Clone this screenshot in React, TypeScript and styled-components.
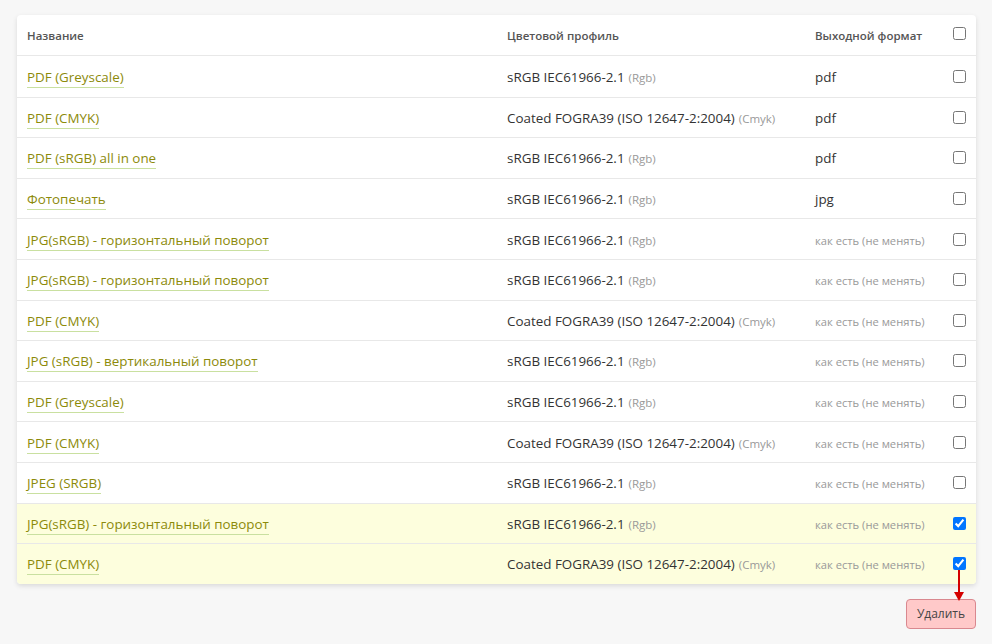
import React, { useState } from "react";
import styled, { createGlobalStyle } from "styled-components";

const Global = createGlobalStyle`
  html, body { margin: 0; padding: 0; background: #f7f7f7; }
  body { font-family: "Open Sans", "Noto Sans", sans-serif; color: #333; }
`;

const Page = styled.div`
  padding: 15px 16px 0 17px;
`;

const Card = styled.div`
  background: #fff;
  border-radius: 4px;
  box-shadow: 0 2px 5px rgba(0,0,0,0.12);
  overflow: hidden;
`;

const COLS = "480px 308px 138px 1fr";

const HeaderRow = styled.div`
  display: grid;
  grid-template-columns: ${COLS};
  height: 41px;
  box-sizing: border-box;
  border-bottom: 1px solid #e8e8e8;
  align-items: center;
`;

const HeadCell = styled.div`
  padding-left: 10px;
  font-size: 11.5px;
  font-weight: 600;
  color: #555;
`;

const Row = styled.div<{ $selected?: boolean }>`
  display: grid;
  grid-template-columns: ${COLS};
  height: 40.6px;
  box-sizing: border-box;
  align-items: center;
  background: ${(p) => (p.$selected ? "#fdfedd" : "#fff")};
  & + & { border-top: 1px solid #e8e8e8; }
`;

const Cell = styled.div`
  padding-left: 10px;
  font-size: 13.4px;
  color: #333;
  white-space: nowrap;
  padding-top: 1px;
`;

const NameLink = styled.a`
  color: #8c8a0a;
  text-decoration: none;
  border-bottom: 1px solid #c9e0a0;
  padding-bottom: 1px;
  cursor: pointer;
`;

const Note = styled.span`
  font-size: 11.5px;
  color: #999;
  margin-left: 4px;
`;

const Muted = styled.span`
  font-size: 11.2px;
  color: #999;
`;

const CheckCell = styled.div<{ $up?: boolean }>`
  display: flex;
  justify-content: center;
  margin-top: ${(p) => (p.$up ? "-4px" : "0")};
`;

const Check = styled.input`
  margin: 0;
  width: 13px;
  height: 13px;
`;

const Footer = styled.div`
  display: flex;
  justify-content: flex-end;
  padding-top: 15px;
  position: relative;
`;

const DeleteButton = styled.button`
  width: 70px;
  height: 30px;
  background: #ffc9c9;
  border: 1px solid #d9888f;
  border-radius: 4px;
  font-family: "Open Sans", "Noto Sans", sans-serif;
  font-size: 12px;
  color: #444;
  cursor: pointer;
  padding: 0;
`;

const Arrow = styled.svg`
  position: absolute;
  right: 12px;
  top: -14px;
  z-index: 2;
`;

type Item = { name: string; profile: "rgb" | "cmyk"; format: string | null; checked?: boolean };

const items: Item[] = [
  { name: "PDF (Greyscale)", profile: "rgb", format: "pdf" },
  { name: "PDF (CMYK)", profile: "cmyk", format: "pdf" },
  { name: "PDF (sRGB) all in one", profile: "rgb", format: "pdf" },
  { name: "Фотопечать", profile: "rgb", format: "jpg" },
  { name: "JPG(sRGB) - горизонтальный поворот", profile: "rgb", format: null },
  { name: "JPG(sRGB) - горизонтальный поворот", profile: "rgb", format: null },
  { name: "PDF (CMYK)", profile: "cmyk", format: null },
  { name: "JPG (sRGB) - вертикальный поворот", profile: "rgb", format: null },
  { name: "PDF (Greyscale)", profile: "rgb", format: null },
  { name: "PDF (CMYK)", profile: "cmyk", format: null },
  { name: "JPEG (SRGB)", profile: "rgb", format: null },
  { name: "JPG(sRGB) - горизонтальный поворот", profile: "rgb", format: null, checked: true },
  { name: "PDF (CMYK)", profile: "cmyk", format: null, checked: true },
];

export default function App() {
  const [checked, setChecked] = useState<boolean[]>(items.map((i) => !!i.checked));
  const toggle = (i: number) => setChecked((c) => c.map((v, j) => (j === i ? !v : v)));
  return (
    <Page>
      <Global />
      <Card>
        <HeaderRow>
          <HeadCell>Название</HeadCell>
          <HeadCell>Цветовой профиль</HeadCell>
          <HeadCell>Выходной формат</HeadCell>
          <CheckCell $up>
            <Check type="checkbox" />
          </CheckCell>
        </HeaderRow>
        {items.map((it, i) => (
          <Row key={i} $selected={checked[i]}>
            <Cell>
              <NameLink>{it.name}</NameLink>
            </Cell>
            <Cell>
              {it.profile === "rgb" ? "sRGB IEC61966-2.1" : "Coated FOGRA39 (ISO 12647-2:2004)"}
              <Note>{it.profile === "rgb" ? "(Rgb)" : "(Cmyk)"}</Note>
            </Cell>
            <Cell>{it.format ? it.format : <Muted>как есть (не менять)</Muted>}</Cell>
            <CheckCell>
              <Check type="checkbox" checked={checked[i]} onChange={() => toggle(i)} />
            </CheckCell>
          </Row>
        ))}
      </Card>
      <Footer>
        <Arrow width="10" height="31" viewBox="0 0 10 31">
          <line x1="5" y1="0" x2="5" y2="23" stroke="#d40000" strokeWidth="2" />
          <polygon points="0,22 10,22 5,31" fill="#d40000" />
        </Arrow>
        <DeleteButton>Удалить</DeleteButton>
      </Footer>
    </Page>
  );
}
